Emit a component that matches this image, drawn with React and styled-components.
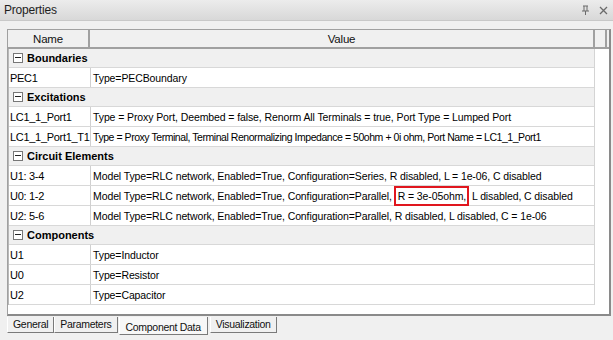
import React from "react";
import styled, { createGlobalStyle } from "styled-components";

const GlobalStyle = createGlobalStyle`
  html, body { margin: 0; padding: 0; background: #f0f0f0; }
  * { box-sizing: border-box; }
`;

const data = [
  { group: "Boundaries", rows: [{ name: "PEC1", value: "Type=PECBoundary" }] },
  {
    group: "Excitations",
    rows: [
      { name: "LC1_1_Port1", value: "Type = Proxy Port, Deembed = false, Renorm All Terminals = true, Port Type = Lumped Port" },
      {
        name: "LC1_1_Port1_T1",
        value: "Type = Proxy Terminal, Terminal Renormalizing Impedance = 50ohm + 0i ohm, Port Name = LC1_1_Port1",
        tight: true,
      },
    ],
  },
  {
    group: "Circuit Elements",
    rows: [
      { name: "U1: 3-4", value: "Model Type=RLC network, Enabled=True, Configuration=Series, R disabled, L = 1e-06, C disabled" },
      {
        name: "U0: 1-2",
        value: "Model Type=RLC network, Enabled=True, Configuration=Parallel, ",
        mark: "R = 3e-05ohm,",
        rest: " L disabled, C disabled",
      },
      { name: "U2: 5-6", value: "Model Type=RLC network, Enabled=True, Configuration=Parallel, R disabled, L disabled, C = 1e-06" },
    ],
  },
  {
    group: "Components",
    rows: [
      { name: "U1", value: "Type=Inductor" },
      { name: "U0", value: "Type=Resistor" },
      { name: "U2", value: "Type=Capacitor" },
    ],
  },
];

const tabs = ["General", "Parameters", "Component Data", "Visualization"];

const Window = styled.div`
  width: 613px;
  height: 340px;
  background: #f0f0f0;
  font-family: "Liberation Sans", Arial, sans-serif;
  font-size: 10.5px;
  letter-spacing: -0.1px;
  color: #000;
  display: flex;
  flex-direction: column;
  overflow: hidden;
`;

const TitleBar = styled.div`
  height: 21px;
  display: flex;
  align-items: center;
  padding: 0 5px 0 4px;
  background: linear-gradient(#ececec, #d8d8d8);
  border-bottom: 1px solid #c8c8c8;
  font-size: 12px;
  letter-spacing: -0.2px;
  color: #1e1e1e;
`;

const Title = styled.span`
  flex: 1;
`;

const TitleButtons = styled.div`
  display: flex;
  gap: 9px;
  align-items: center;
  color: #6b6b6b;
`;

const Body = styled.div`
  flex: 1;
  display: flex;
  flex-direction: column;
  padding: 8px 2px 0 7px;
`;

const Frame = styled.div`
  height: 287px;
  border: 1px solid #a0a0a0;
  border-right: 2px solid #8a8a8a;
  border-bottom: 2px solid #8a8a8a;
  background: #fff;
  display: flex;
  flex-direction: column;
`;

const HeaderRow = styled.div`
  display: grid;
  grid-template-columns: 82px 505px 12px;
  height: 19px;
  background: #f0f0f0;
  border-bottom: 2px solid #a0a0a0;
`;

const HeaderCell = styled.div`
  display: flex;
  align-items: center;
  justify-content: center;
  border-right: 2px solid #a0a0a0;
  color: #111;
  font-size: 11.5px;
  letter-spacing: -0.2px;
`;

const Rows = styled.div`
  width: 587px;
  display: flex;
  flex-direction: column;
  border-right: 1px solid #d4d4d4;
  border-left: 1px solid #b8b8b8;
`;

const GroupRow = styled.div`
  height: 19px;
  display: flex;
  align-items: center;
  gap: 4px;
  padding-left: 4px;
  background: #f0f0f0;
  border-bottom: 1px solid #d8d8d8;
  font-weight: bold;
  font-size: 11px;
  letter-spacing: 0;
`;

const Toggle = styled.span`
  width: 10px;
  height: 10px;
  border: 1px solid #777;
  background: #fff;
  position: relative;
  &::after {
    content: "";
    position: absolute;
    left: 1px;
    right: 1px;
    top: 3px;
    height: 1px;
    background: #222;
  }
`;

const DataRow = styled.div`
  height: 20px;
  display: grid;
  grid-template-columns: 82px 1fr;
  border-bottom: 1px solid #d8d8d8;
`;

const NameCell = styled.div`
  display: flex;
  align-items: center;
  padding-left: 1px;
  border-right: 1px solid #d0d0d0;
  font-size: 11px;
  letter-spacing: -0.3px;
  white-space: nowrap;
`;

const ValueCell = styled.div`
  display: flex;
  align-items: center;
  padding-left: 2px;
  white-space: pre;
  letter-spacing: ${(p) => (p.$tight ? "-0.45px" : "inherit")};
`;

const Mark = styled.span`
  border: 2px solid #e0161e;
  padding: 2px 1px 2px 2px;
  margin-left: -1px;
`;

const TabStrip = styled.div`
  display: flex;
  align-items: flex-start;
  height: 22px;
  margin-top: 1px;
`;

const Tab = styled.div`
  height: ${(p) => (p.$active ? "18px" : "16px")};
  margin: ${(p) => (p.$active ? "0 2px 0 1px" : "0")};
  padding: ${(p) => (p.$active ? "4px 6px 0" : "1px 5px 0")};
  background: ${(p) => (p.$active ? "#f7f7f7" : "#f0f0f0")};
  border-left: 1px solid #fff;
  border-right: 1px solid #7a7a7a;
  border-bottom: 1px solid #7a7a7a;
  font-size: 10.5px;
  letter-spacing: -0.3px;
  color: #111;
  white-space: nowrap;
`;

const PinIcon = () => (
  <svg width="9" height="11" viewBox="0 0 9 11">
    <path d="M2 1h5M3 1v5M6 1v5M1 6h7M4.5 6v4" stroke="#6b6b6b" strokeWidth="1" fill="none" />
  </svg>
);

const CloseIcon = () => (
  <svg width="9" height="9" viewBox="0 0 9 9">
    <path d="M1 1l7 7M8 1l-7 7" stroke="#6b6b6b" strokeWidth="1.3" />
  </svg>
);

const App = () => {
  return (
    <>
      <GlobalStyle />
      <Window>
        <TitleBar>
          <Title>Properties</Title>
          <TitleButtons>
            <PinIcon />
            <CloseIcon />
          </TitleButtons>
        </TitleBar>
        <Body>
          <Frame>
            <HeaderRow>
              <HeaderCell>Name</HeaderCell>
              <HeaderCell>Value</HeaderCell>
              <HeaderCell />
            </HeaderRow>
            <Rows>
              {data.map((g) => (
                <React.Fragment key={g.group}>
                  <GroupRow>
                    <Toggle />
                    {g.group}
                  </GroupRow>
                  {g.rows.map((r) => (
                    <DataRow key={g.group + r.name}>
                      <NameCell>{r.name}</NameCell>
                      <ValueCell $tight={r.tight}>
                        {r.value}
                        {r.mark && <Mark>{r.mark}</Mark>}
                        {r.rest}
                      </ValueCell>
                    </DataRow>
                  ))}
                </React.Fragment>
              ))}
            </Rows>
          </Frame>
          <TabStrip>
            {tabs.map((t) => (
              <Tab key={t} $active={t === "Component Data"}>
                {t}
              </Tab>
            ))}
          </TabStrip>
        </Body>
      </Window>
    </>
  );
};

export default App;
